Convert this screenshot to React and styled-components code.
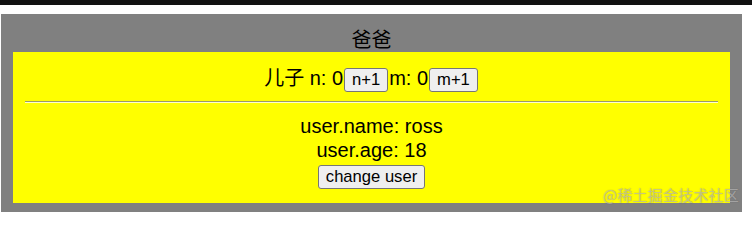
import React from "react";
import styled, { createGlobalStyle } from "styled-components";

const Global = createGlobalStyle`
  html, body { margin: 0; padding: 0; background: #fff; }
  body { width: 752px; height: 212px; overflow: hidden; position: relative;
    font-family: "Liberation Sans", "Noto Sans CJK SC", sans-serif; color: #000; }
`;

const TopBar = styled.div`
  height: 5px;
  background: #111;
`;

const Page = styled.div`
  padding: 9px 10px 0 1px;
`;

const Father = styled.div`
  background: #808080;
  padding: 14px 12px 24px;
  font-size: 20px;
  text-align: center;
`;

const Title = styled.div`
  line-height: 24px;
  height: 24px;
`;

const Son = styled.div`
  background: #ffff00;
  padding: 13px 12px 14px;
  text-align: center;
`;

const Row = styled.div`
  line-height: 26px;
  height: 26px;
`;

const Line = styled.div`
  line-height: 24px;
  height: 24px;
`;

const Btn = styled.button`
  font-family: "Liberation Sans", Arial, sans-serif;
  font-size: 16.6px;
  line-height: 18px;
  padding: 2px 7px;
  margin: 0 1px;
  border: 1px solid #767676;
  border-radius: 3px;
  background: #efefef;
  color: #000;
  vertical-align: middle;
`;

const ChangeRow = styled.div`
  line-height: 27px;
  height: 27px;
`;

const Rule = styled.hr`
  margin: 10px 0 11px;
  border: none;
  border-top: 1px solid #9a9a6a;
  border-bottom: 1px solid #ffffcc;
  height: 0;
`;

const Watermark = styled.div`
  position: absolute;
  right: 13px;
  bottom: 9px;
  font-family: "Noto Sans CJK SC", sans-serif;
  font-size: 15px;
  line-height: 16px;
  color: rgba(225, 225, 225, 0.5);
  text-shadow: 0 0 1px rgba(60, 60, 60, 0.5);
  letter-spacing: 0.2px;
`;

export default function App() {
  return (
    <>
      <Global />
      <TopBar />
      <Page>
        <Father>
          <Title>爸爸</Title>
          <Son>
            <Row>
              儿子 n: 0<Btn>n+1</Btn>m: 0<Btn>m+1</Btn>
            </Row>
            <Rule />
            <Line>user.name: ross</Line>
            <Line>user.age: 18</Line>
            <ChangeRow>
              <Btn>change user</Btn>
            </ChangeRow>
          </Son>
        </Father>
      </Page>
      <Watermark>@稀土掘金技术社区</Watermark>
    </>
  );
}
